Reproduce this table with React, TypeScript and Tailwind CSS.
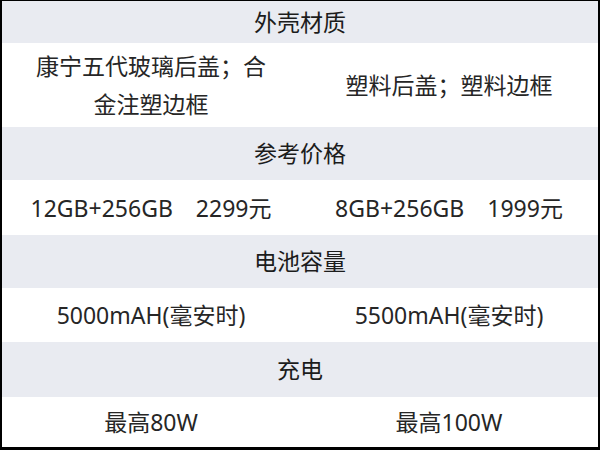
const font = { fontFamily: '"Noto Sans", "Noto Sans CJK SC", sans-serif' };

type Row =
  | { kind: "head"; label: string; h: string }
  | { kind: "body"; left: string; right: string; h: string; wrap?: boolean };

const rows: Row[] = [
  { kind: "head", label: "外壳材质", h: "h-[42px]" },
  { kind: "body", left: "康宁五代玻璃后盖；合金注塑边框", right: "塑料后盖；塑料边框", h: "h-[84px]", wrap: true },
  { kind: "head", label: "参考价格", h: "h-[53px]" },
  { kind: "body", left: "12GB+256GB\u30002299元", right: "8GB+256GB\u30001999元", h: "h-[55px]" },
  { kind: "head", label: "电池容量", h: "h-[53px]" },
  { kind: "body", left: "5000mAH(毫安时)", right: "5500mAH(毫安时)", h: "h-[54px]" },
  { kind: "head", label: "充电", h: "h-[55px]" },
  { kind: "body", left: "最高80W", right: "最高100W", h: "h-[49px]" },
];

export default function App() {
  return (
    <div className="w-[600px] h-[450px] overflow-hidden bg-black pt-[1px] pl-[2px] pr-[2px] pb-[3px]" style={font}>
      <div className="h-full bg-white flex flex-col overflow-hidden">
        {rows.map((r, i) =>
          r.kind === "head" ? (
            <div key={i} className={`${r.h} shrink-0 bg-[#e9ebf1] flex items-center justify-center text-[23px] text-[#1c1c1c]`}>
              {r.label}
            </div>
          ) : (
            <div key={i} className={`${r.h} shrink-0 bg-white grid grid-cols-2 items-center text-[23px] leading-[38px] text-[#262626]`}>
              <div className={r.wrap ? "px-8 text-center" : "whitespace-nowrap text-center"}>{r.left}</div>
              <div className={r.wrap ? "px-8 text-center" : "whitespace-nowrap text-center"}>{r.right}</div>
            </div>
          )
        )}
      </div>
    </div>
  );
}
